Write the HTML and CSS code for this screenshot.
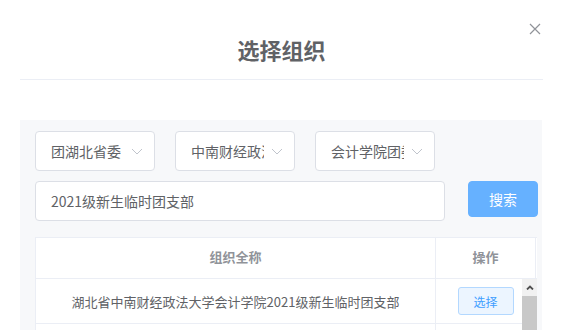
FILE: index.html
```html
<!DOCTYPE html>
<html lang="zh-CN">
<head>
  <meta charset="UTF-8" />
  <meta name="viewport" content="width=device-width, initial-scale=1">
  <title>选择组织</title>
  <link rel="stylesheet" href="styles.css">
</head>
<body>

  <div class="dialog">
    <div class="dialog-header">
      <span class="dialog-title">选择组织</span>
      <button class="dialog-close" aria-label="关闭">
        <svg width="12" height="12" viewBox="0 0 12 12"><path d="M1 1L11 11M11 1L1 11" stroke="#909399" stroke-width="1.2" fill="none"/></svg>
      </button>
    </div>

    <div class="dialog-body">
      <div class="panel">

        <!-- 三级组织选择 -->
        <div class="selects">
          <div class="select">
            <span class="select-text">团湖北省委</span>
            <svg class="select-arrow" width="12" height="7" viewBox="0 0 12 7"><path d="M1 1L6 6L11 1" stroke="#c0c4cc" stroke-width="1" fill="none"/></svg>
          </div>
          <div class="select">
            <span class="select-text">中南财经政法大学团委</span>
            <svg class="select-arrow" width="12" height="7" viewBox="0 0 12 7"><path d="M1 1L6 6L11 1" stroke="#c0c4cc" stroke-width="1" fill="none"/></svg>
          </div>
          <div class="select">
            <span class="select-text">会计学院团委</span>
            <svg class="select-arrow" width="12" height="7" viewBox="0 0 12 7"><path d="M1 1L6 6L11 1" stroke="#c0c4cc" stroke-width="1" fill="none"/></svg>
          </div>
        </div>

        <div class="search-row">
          <div class="search-input">2021级新生临时团支部</div>
          <button class="btn-search">搜索</button>
        </div>

        <!-- 结果表格 -->
        <div class="org-table">
          <div class="org-head">
            <div class="cell cell-name">组织全称</div>
            <div class="cell cell-op">操作</div>
            <div class="gutter"></div>
          </div>
          <div class="org-body">
            <div class="org-row">
              <div class="cell cell-name">湖北省中南财经政法大学会计学院2021级新生临时团支部</div>
              <div class="cell cell-op"><button class="btn-pick">选择</button></div>
            </div>
            <div class="org-row">
              <div class="cell cell-name"></div>
              <div class="cell cell-op"></div>
            </div>
            <div class="scrollbar">
              <div class="scroll-up">
                <svg width="8" height="5" viewBox="0 0 8 5"><path d="M1 4.5L4 1.5L7 4.5" stroke="#505050" stroke-width="1.8" fill="none"/></svg>
              </div>
              <div class="scroll-thumb"></div>
            </div>
          </div>
        </div>

      </div>
    </div>
  </div>

</body>
</html>
```

FILE: styles.css
```css
html, body {
  margin: 0;
  padding: 0;
  overflow: hidden;
  background: #fff;
}

body {
  font-family: "Noto Sans CJK SC", "Noto Sans", sans-serif;
  font-size: 14px;
  color: #606266;
}

.dialog {
  width: 523px;
  margin-left: 20px;
}

.dialog-header {
  position: relative;
  height: 79px;
  border-bottom: 1px solid #ebeef5;
  text-align: center;
}

.dialog-title {
  display: inline-block;
  padding-top: 37px;
  font-size: 22px;
  line-height: 24px;
  font-weight: bold;
  color: #606266;
}

.dialog-close {
  position: absolute;
  top: 22px;
  right: 1px;
  width: 14px;
  height: 14px;
  padding: 0;
  border: none;
  background: none;
  display: flex;
  align-items: center;
  justify-content: center;
}

.dialog-body {
  padding-top: 40px;
}

.panel {
  height: 260px;
  width: 507px;
  padding: 11px 0 0 15px;
  background: #f7f8fa;
}

.selects {
  display: flex;
  gap: 20px;
}

.select {
  position: relative;
  box-sizing: border-box;
  width: 120px;
  height: 40px;
  padding: 0 30px 0 15px;
  background: #fff;
  border: 1px solid #dcdfe6;
  border-radius: 4px;
  display: flex;
  align-items: center;
}

.select-text {
  display: block;
  overflow: hidden;
  white-space: nowrap;
  line-height: 38px;
}

.select-arrow {
  position: absolute;
  right: 11px;
  top: 16px;
}

.search-row {
  display: flex;
  align-items: flex-start;
  margin-top: 10px;
}

.search-input {
  box-sizing: border-box;
  width: 410px;
  height: 40px;
  padding: 0 15px;
  line-height: 38px;
  background: #fff;
  border: 1px solid #dcdfe6;
  border-radius: 4px;
}

.btn-search {
  width: 70px;
  height: 36px;
  margin-left: 23px;
  padding: 0;
  border: 1px solid #66b1ff;
  border-radius: 4px;
  background: #66b1ff;
  color: #fff;
  font-family: inherit;
  font-size: 14px;
}

.org-table {
  width: 501px;
  margin-top: 16px;
  border-left: 1px solid #ebeef5;
  background: #fff;
  font-size: 13px;
}

.org-head {
  display: flex;
  height: 40px;
  border-top: 1px solid #ebeef5;
  border-bottom: 1px solid #ebeef5;
  color: #909399;
  font-weight: bold;
}

.cell {
  box-sizing: border-box;
  display: flex;
  align-items: center;
  justify-content: center;
  border-right: 1px solid #ebeef5;
}

.org-head .cell {
  padding-bottom: 3px;
}

.cell-name {
  width: 400px;
}

.cell-op {
  width: 100px;
}

.gutter {
  width: 1px;
}

.org-body {
  position: relative;
}

.org-row {
  display: flex;
  height: 44px;
  border-bottom: 1px solid #ebeef5;
}

.btn-pick {
  width: 56px;
  height: 28px;
  padding: 0;
  border: 1px solid #b3d8ff;
  border-radius: 3px;
  background: #ecf5ff;
  color: #409eff;
  font-family: inherit;
  font-size: 12px;
}

.scrollbar {
  position: absolute;
  top: 0;
  right: 0;
  bottom: 0;
  width: 15px;
  background: #f1f1f1;
  display: flex;
  flex-direction: column;
}

.scroll-up {
  height: 17px;
  display: flex;
  align-items: center;
  justify-content: center;
}

.scroll-thumb {
  flex: 1;
  background: #c8c8c8;
}
```
